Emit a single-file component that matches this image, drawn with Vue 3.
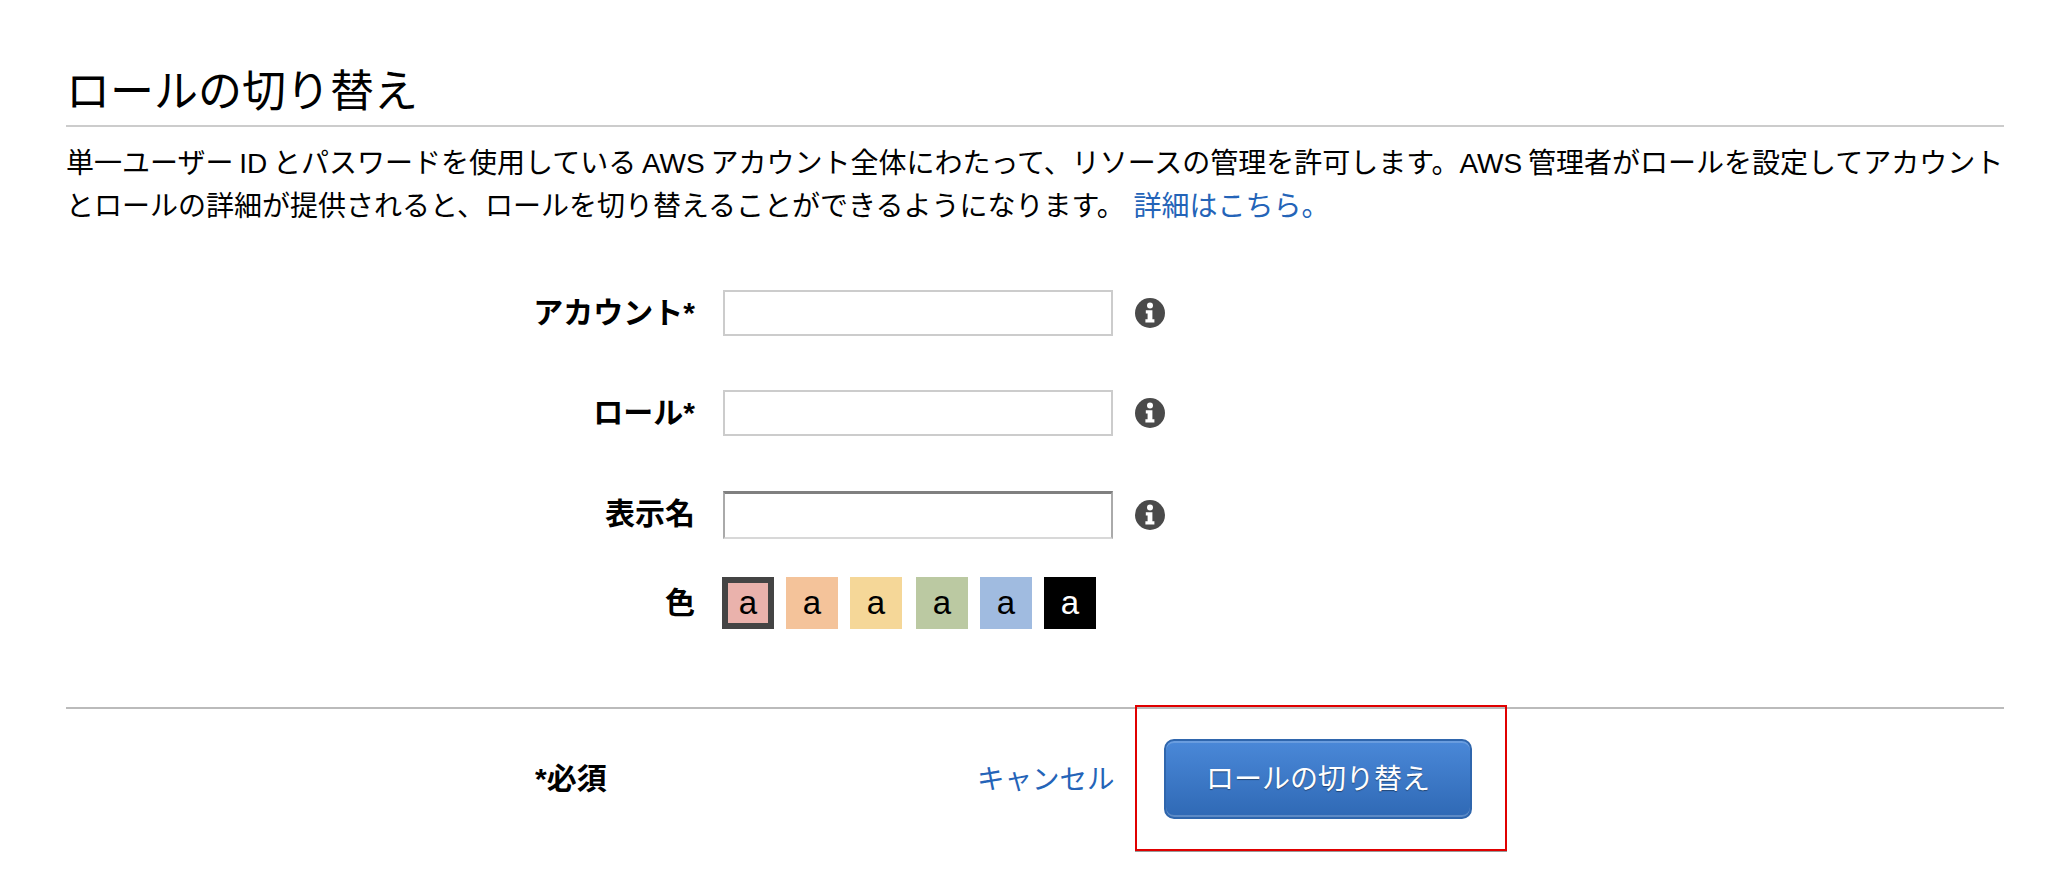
<script setup>
const fields = [
  { label: 'アカウント*', inset: false },
  { label: 'ロール*', inset: false },
  { label: '表示名', inset: true }
]
const colors = [
  { bg: '#eab2ac', selected: true },
  { bg: '#f4c39a' },
  { bg: '#f5d798' },
  { bg: '#bbc9a2' },
  { bg: '#a0bbe0' },
  { bg: '#000000', light: true }
]
</script>

<template>
  <div class="page">
    <h1 class="title">ロールの切り替え</h1>
    <p class="desc">単一ユーザー ID とパスワードを使用している AWS アカウント全体にわたって、リソースの管理を許可します。AWS 管理者がロールを設定してアカウント<br />とロールの詳細が提供されると、ロールを切り替えることができるようになります。 <a class="link">詳細はこちら。</a></p>

    <form class="form" @submit.prevent>
      <div v-for="f in fields" :key="f.label" class="row" :class="{ 'inset-row': f.inset }">
        <label class="label">{{ f.label }}</label>
        <input class="input" type="text" />
        <svg class="info" width="30" height="30" viewBox="0 0 30 30" aria-hidden="true">
          <circle cx="15" cy="15" r="15" fill="#4a4a4a" />
          <circle cx="15" cy="7.6" r="3" fill="#fff" />
          <path d="M10.8 12.2h6.6v9h2v3.4h-9v-3.4h2.2v-5.6h-1.8z" fill="#fff" />
        </svg>
      </div>
      <div class="row color-row">
        <label class="label">色</label>
        <div class="swatches">
          <span
            v-for="c in colors"
            :key="c.bg"
            class="swatch"
            :class="{ selected: c.selected, light: c.light }"
            :style="{ backgroundColor: c.bg }"
          >a</span>
        </div>
      </div>
    </form>

    <div class="footer">
      <span class="required">*必須</span>
      <a class="cancel">キャンセル</a>
      <button class="submit" type="button">ロールの切り替え</button>
      <div class="highlight"></div>
    </div>
  </div>
</template>

<style>
html, body { background: #fff; margin: 0; }
</style>

<style scoped>
.page {
  width: 2050px;
  height: 874px;
  box-sizing: border-box;
  padding: 60px 46px 0 66px;
  font-family: "Liberation Sans", "Noto Sans CJK JP", sans-serif;
  color: #000;
  overflow: hidden;
}
.title {
  margin: 0;
  height: 65px;
  line-height: 64px;
  font-size: 44px;
  font-weight: 400;
  border-bottom: 2px solid #ccc;
}
.desc {
  margin: 0;
  padding-top: 15px;
  font-size: 28px;
  line-height: 43px;
  word-spacing: -2px;
  white-space: nowrap;
}
.link {
  color: #2464b8;
  margin-left: 3px;
}
.form {
  margin-top: 62px;
  display: flex;
  flex-direction: column;
}
.row {
  display: flex;
  align-items: center;
  height: 46px;
  margin-bottom: 54px;
}
.label {
  width: 629px;
  flex: none;
  text-align: right;
  font-size: 30px;
  font-weight: 700;
  padding-bottom: 6px;
}
.input {
  margin-left: 28px;
  width: 390px;
  height: 46px;
  box-sizing: border-box;
  border: 2px solid #ccc;
  background: #fff;
  padding: 0;
  outline: none;
}
.inset-row {
  height: 48px;
  margin-top: 1px;
}
.inset-row .label { padding-bottom: 8px; }
.inset-row .input {
  height: 48px;
  border-top: 3px solid #808080;
  border-left-color: #aaa;
  border-right-color: #aaa;
  border-bottom-color: #d8d8d8;
}
.info {
  margin-left: 22px;
  flex: none;
  filter: blur(0.5px);
}
.color-row {
  height: 52px;
  margin-top: -16px;
  margin-bottom: 0;
}
.swatches {
  margin-left: 27px;
  display: flex;
  gap: 12px;
}
.swatch {
  width: 52px;
  height: 52px;
  box-sizing: border-box;
  display: flex;
  align-items: center;
  justify-content: center;
  font-size: 33px;
  color: #000;
}
.swatch:nth-child(4) { margin-left: 2px; }
.swatch.selected { border: 6px solid #444; }
.swatch.light { color: #fff; }
.footer {
  position: relative;
  margin-top: 78px;
  border-top: 2px solid #bbb;
  padding-top: 30px;
  height: 80px;
  display: flex;
  align-items: center;
}
.required {
  margin-left: 469px;
  width: 442px;
  font-size: 30px;
  font-weight: 700;
  padding-bottom: 6px;
}
.cancel {
  width: 136px;
  flex: none;
  font-size: 27.5px;
  white-space: nowrap;
  color: #2464b8;
  padding-bottom: 5px;
}
.submit {
  margin-left: 51px;
  width: 308px;
  height: 80px;
  box-sizing: border-box;
  border: 2px solid #2f66ad;
  border-radius: 10px;
  background: linear-gradient(#4a88d8, #2f69b5);
  box-shadow: inset 0 2px 0 rgba(255, 255, 255, 0.18), inset 0 -2px 0 rgba(255, 255, 255, 0.22);
  color: #fff;
  font-family: inherit;
  font-size: 28px;
  text-shadow: 0 1px 1px rgba(0, 0, 0, 0.4);
  padding: 0 0 4px;
}
.highlight {
  position: absolute;
  left: 1069px;
  top: -4px;
  width: 372px;
  height: 146px;
  box-sizing: border-box;
  border: 2px solid #e00000;
  box-shadow: 0 1px 0 #999;
  pointer-events: none;
}
</style>
